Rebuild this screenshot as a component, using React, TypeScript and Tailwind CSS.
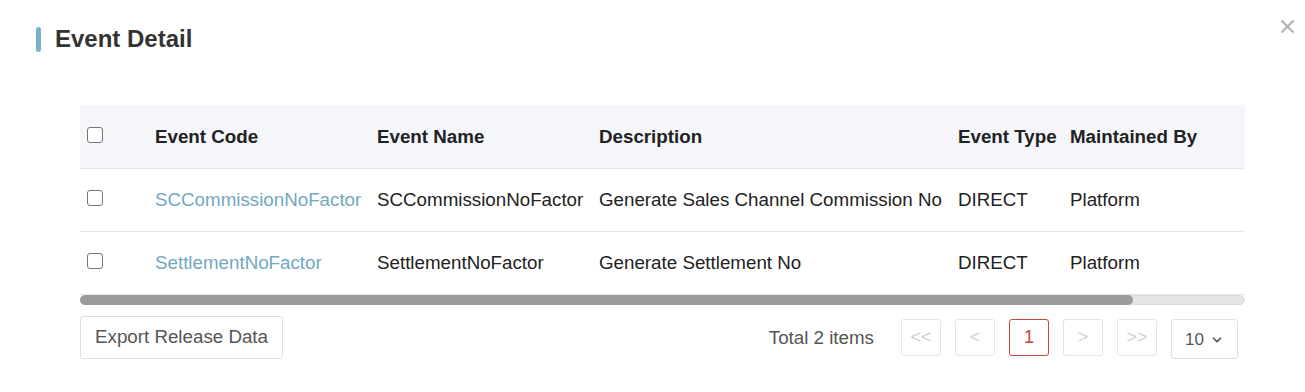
import { ChevronDown } from "lucide-react";

const rows = [
  { code: "SCCommissionNoFactor", name: "SCCommissionNoFactor", desc: "Generate Sales Channel Commission No", type: "DIRECT", by: "Platform" },
  { code: "SettlementNoFactor", name: "SettlementNoFactor", desc: "Generate Settlement No", type: "DIRECT", by: "Platform" },
];

function Box() {
  return <span className="block h-[16px] w-[16px] rounded-[3px] border border-[#767676] bg-white" />;
}

function PageBtn({ label, active }: { label: string; active?: boolean }) {
  return (
    <button
      className={
        active
          ? "flex h-[37px] w-[40px] items-center justify-center rounded-[3px] border border-[#c9463d] text-[18px] text-[#c9463d]"
          : "flex h-[37px] w-[40px] items-center justify-center rounded-[3px] border border-[#e3e3e3] text-[18px] text-[#cfcfcf]"
      }
    >
      {label}
    </button>
  );
}

export default function App() {
  return (
    <div className="h-[392px] w-[1305px] bg-white font-['Liberation_Sans',Arial,sans-serif] text-[18.75px] text-[#222]">
      <div className="flex items-start justify-between pl-[36px] pr-[10px] pt-[27px]">
        <div className="flex items-center gap-[14px]">
          <span className="h-[25px] w-[5px] rounded-full bg-[#7ab0c8]" />
          <h1 className="-mt-[2px] text-[24px] font-bold leading-[25px] text-[#333]">Event Detail</h1>
        </div>
        <button className="-mt-[8px] p-[0px] text-[#b3b3b3]">
          <svg width="15" height="15" viewBox="0 0 15 15" fill="none">
            <path d="M1.5 1.5L13.5 13.5M13.5 1.5L1.5 13.5" stroke="currentColor" strokeWidth="2.2" />
          </svg>
        </button>
      </div>

      <div className="ml-[80px] mt-[53px] w-[1165px]">
        <div className="overflow-hidden">
          <table className="w-[1290px] table-fixed border-collapse text-left">
            <colgroup>
              <col className="w-[63px]" />
              <col className="w-[222px]" />
              <col className="w-[222px]" />
              <col className="w-[359px]" />
              <col className="w-[112px]" />
              <col className="w-[312px]" />
            </colgroup>
            <thead>
              <tr className="h-[63px] border-b border-[#e6e6e6] bg-[#f5f6fa]">
                <th className="pl-[7px] align-middle"><span className="-mt-[3px] block"><Box /></span></th>
                <th className="whitespace-nowrap pl-[12px] pt-[2px] font-bold">Event Code</th>
                <th className="whitespace-nowrap pl-[12px] pt-[2px] font-bold">Event Name</th>
                <th className="whitespace-nowrap pl-[12px] pt-[2px] font-bold">Description</th>
                <th className="whitespace-nowrap pl-[12px] pt-[2px] font-bold">Event Type</th>
                <th className="whitespace-nowrap pl-[12px] pt-[2px] font-bold">Maintained By</th>
              </tr>
            </thead>
            <tbody>
              {rows.map((r) => (
                <tr key={r.code} className="h-[63px] border-b border-[#e6e6e6]">
                  <td className="pl-[7px]"><span className="-mt-[3px] block"><Box /></span></td>
                  <td className="whitespace-nowrap pl-[12px] pt-[2px] text-[#71a8c3]">{r.code}</td>
                  <td className="whitespace-nowrap pl-[12px] pt-[2px]">{r.name}</td>
                  <td className="whitespace-nowrap pl-[12px] pt-[2px]">{r.desc}</td>
                  <td className="whitespace-nowrap pl-[12px] pt-[2px]">{r.type}</td>
                  <td className="whitespace-nowrap pl-[12px] pt-[2px]">{r.by}</td>
                </tr>
              ))}
            </tbody>
          </table>
        </div>
        <div className="h-[10px] w-full rounded-full border border-[#dcdcdc] bg-[#e4e4e4]">
          <div className="-m-px h-[10px] w-[1053px] rounded-full bg-[#9a9a9a]" />
        </div>

        <div className="mt-[11px] flex items-start justify-between">
          <button className="h-[43px] rounded-[3px] border border-[#dae0e8] px-[14px] text-[#555]">Export Release Data</button>
          <div className="mr-[7px] mt-[3px] flex items-center">
            <span className="mr-[27px] text-[#555]">Total 2 items</span>
            <div className="flex gap-[14px]">
              <PageBtn label="<<" />
              <PageBtn label="<" />
              <PageBtn label="1" active />
              <PageBtn label=">" />
              <PageBtn label=">>" />
              <button className="flex h-[40px] w-[67px] items-center justify-center gap-[6px] rounded-[3px] border border-[#e0e0e0] pt-[2px] text-[17px] text-[#555]">
                10 <ChevronDown size={14} strokeWidth={3} />
              </button>
            </div>
          </div>
        </div>
      </div>
    </div>
  );
}
